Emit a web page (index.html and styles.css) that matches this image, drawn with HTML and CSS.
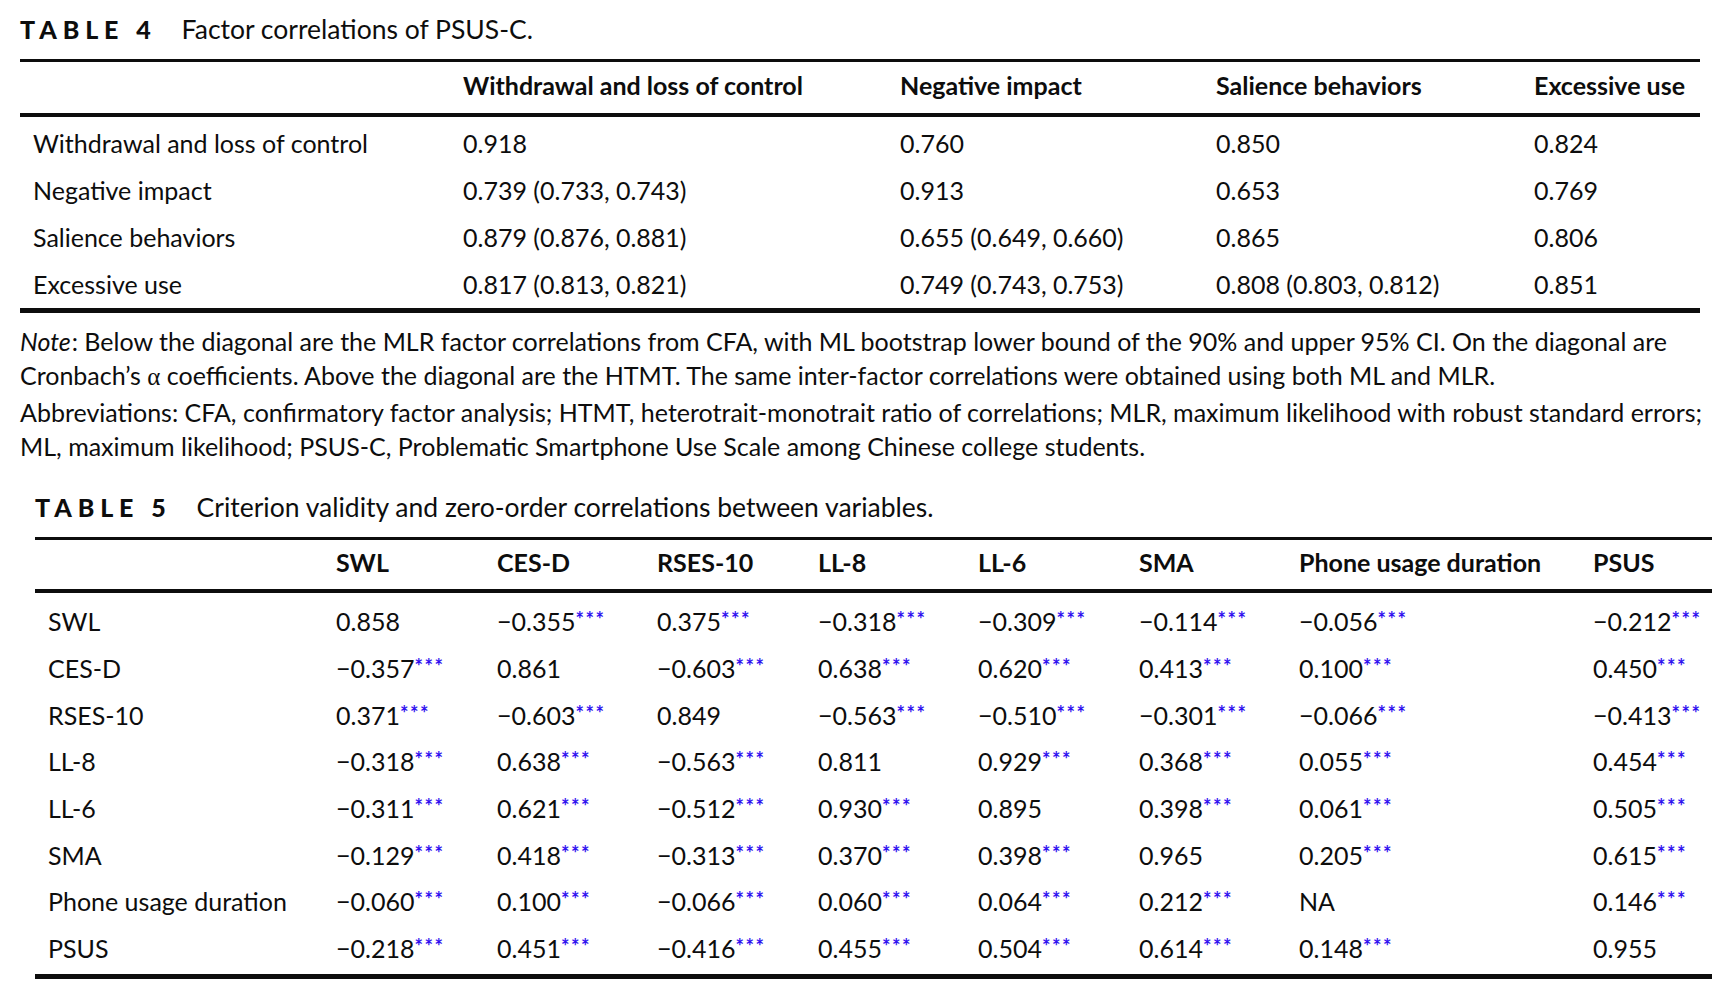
FILE: index.html
```html
<!DOCTYPE html>
<html lang="en">
<head>
<meta charset="utf-8">
<title>Tables 4 and 5</title>
<link rel="stylesheet" href="styles.css">
</head>
<body>
<div class="page">
  <section class="block block-t4">
    <div class="caption"><span class="cap-label">TABLE 4</span><span class="cap-title">Factor correlations of PSUS-C.</span></div>
    <table class="tbl tbl-4">
      <colgroup>
        <col class="w443"><col class="w437"><col class="w316"><col class="w318"><col class="w166">
      </colgroup>
      <thead>
        <tr><th></th><th>Withdrawal and loss of control</th><th>Negative impact</th><th>Salience behaviors</th><th>Excessive use</th></tr>
      </thead>
      <tbody>
        <tr><td>Withdrawal and loss of control</td><td>0.918</td><td>0.760</td><td>0.850</td><td>0.824</td></tr>
        <tr><td>Negative impact</td><td>0.739 (0.733, 0.743)</td><td>0.913</td><td>0.653</td><td>0.769</td></tr>
        <tr><td>Salience behaviors</td><td>0.879 (0.876, 0.881)</td><td>0.655 (0.649, 0.660)</td><td>0.865</td><td>0.806</td></tr>
        <tr><td>Excessive use</td><td>0.817 (0.813, 0.821)</td><td>0.749 (0.743, 0.753)</td><td>0.808 (0.803, 0.812)</td><td>0.851</td></tr>
      </tbody>
    </table>
    <div class="note">
      <p><em class="note-lead">Note</em>: Below the diagonal are the MLR factor correlations from CFA, with ML bootstrap lower bound of the 90% and upper 95% CI. On the diagonal are Cronbach’s <span class="greek">α</span> coefficients. Above the diagonal are the HTMT. The same inter-factor correlations were obtained using both ML and MLR.</p>
      <p>Abbreviations: CFA, confirmatory factor analysis; HTMT, heterotrait-monotrait ratio of correlations; MLR, maximum likelihood with robust standard errors; ML, maximum likelihood; PSUS-C, Problematic Smartphone Use Scale among Chinese college students.</p>
    </div>
  </section>

  <section class="block block-t5">
    <div class="caption"><span class="cap-label">TABLE 5</span><span class="cap-title">Criterion validity and zero-order correlations between variables.</span></div>
    <table class="tbl tbl-5">
      <colgroup>
        <col class="w301"><col class="w161"><col class="w160"><col class="w161"><col class="w160"><col class="w161"><col class="w160"><col class="w294"><col class="w119">
      </colgroup>
      <thead>
        <tr><th></th><th>SWL</th><th>CES-D</th><th>RSES-10</th><th>LL-8</th><th>LL-6</th><th>SMA</th><th>Phone usage duration</th><th>PSUS</th></tr>
      </thead>
      <tbody>
        <tr><td>SWL</td><td>0.858</td><td>−0.355<sup class="sig">***</sup></td><td>0.375<sup class="sig">***</sup></td><td>−0.318<sup class="sig">***</sup></td><td>−0.309<sup class="sig">***</sup></td><td>−0.114<sup class="sig">***</sup></td><td>−0.056<sup class="sig">***</sup></td><td>−0.212<sup class="sig">***</sup></td></tr>
        <tr><td>CES-D</td><td>−0.357<sup class="sig">***</sup></td><td>0.861</td><td>−0.603<sup class="sig">***</sup></td><td>0.638<sup class="sig">***</sup></td><td>0.620<sup class="sig">***</sup></td><td>0.413<sup class="sig">***</sup></td><td>0.100<sup class="sig">***</sup></td><td>0.450<sup class="sig">***</sup></td></tr>
        <tr><td>RSES-10</td><td>0.371<sup class="sig">***</sup></td><td>−0.603<sup class="sig">***</sup></td><td>0.849</td><td>−0.563<sup class="sig">***</sup></td><td>−0.510<sup class="sig">***</sup></td><td>−0.301<sup class="sig">***</sup></td><td>−0.066<sup class="sig">***</sup></td><td>−0.413<sup class="sig">***</sup></td></tr>
        <tr><td>LL-8</td><td>−0.318<sup class="sig">***</sup></td><td>0.638<sup class="sig">***</sup></td><td>−0.563<sup class="sig">***</sup></td><td>0.811</td><td>0.929<sup class="sig">***</sup></td><td>0.368<sup class="sig">***</sup></td><td>0.055<sup class="sig">***</sup></td><td>0.454<sup class="sig">***</sup></td></tr>
        <tr><td>LL-6</td><td>−0.311<sup class="sig">***</sup></td><td>0.621<sup class="sig">***</sup></td><td>−0.512<sup class="sig">***</sup></td><td>0.930<sup class="sig">***</sup></td><td>0.895</td><td>0.398<sup class="sig">***</sup></td><td>0.061<sup class="sig">***</sup></td><td>0.505<sup class="sig">***</sup></td></tr>
        <tr><td>SMA</td><td>−0.129<sup class="sig">***</sup></td><td>0.418<sup class="sig">***</sup></td><td>−0.313<sup class="sig">***</sup></td><td>0.370<sup class="sig">***</sup></td><td>0.398<sup class="sig">***</sup></td><td>0.965</td><td>0.205<sup class="sig">***</sup></td><td>0.615<sup class="sig">***</sup></td></tr>
        <tr><td>Phone usage duration</td><td>−0.060<sup class="sig">***</sup></td><td>0.100<sup class="sig">***</sup></td><td>−0.066<sup class="sig">***</sup></td><td>0.060<sup class="sig">***</sup></td><td>0.064<sup class="sig">***</sup></td><td>0.212<sup class="sig">***</sup></td><td>NA</td><td>0.146<sup class="sig">***</sup></td></tr>
        <tr><td>PSUS</td><td>−0.218<sup class="sig">***</sup></td><td>0.451<sup class="sig">***</sup></td><td>−0.416<sup class="sig">***</sup></td><td>0.455<sup class="sig">***</sup></td><td>0.504<sup class="sig">***</sup></td><td>0.614<sup class="sig">***</sup></td><td>0.148<sup class="sig">***</sup></td><td>0.955</td></tr>
      </tbody>
    </table>
  </section>
</div>
</body>
</html>
```

FILE: styles.css
```css
html, body {
  margin: 0;
  padding: 0;
  background: #ffffff;
}

body {
  font-family: Lato, "Open Sans", "DejaVu Sans", sans-serif;
  font-size: 25px;
  color: #0d0d0d;
  width: 1712px;
  overflow: hidden;
}

.page {
  padding-top: 14px;
}

.block-t4 {
  padding-left: 20px;
}

.block-t5 {
  padding-left: 35px;
  margin-top: 28px;
}

.caption {
  line-height: 30px;
  white-space: nowrap;
}

.block-t4 .caption {
  margin-bottom: 14.5px;
}

.block-t5 .caption {
  margin-bottom: 15.5px;
}

.cap-label {
  font-weight: 900;
  letter-spacing: 5.9px;
  margin-right: 25px;
}

.cap-title {
  font-size: 26.5px;
}

.tbl {
  border-collapse: collapse;
  table-layout: fixed;
  border-top: 3px solid #0d0d0d;
}

.tbl-4 {
  width: 1680px;
  border-bottom: 5px solid #0d0d0d;
}

.tbl-5 {
  width: 1677px;
  border-bottom: 5px solid #0d0d0d;
}

.tbl th,
.tbl td {
  text-align: left;
  padding: 0;
  white-space: nowrap;
  vertical-align: top;
}

.tbl th {
  font-weight: 700;
}

.tbl th:first-child,
.tbl td:first-child {
  padding-left: 13px;
}

.tbl thead tr {
  border-bottom: 4px solid #0d0d0d;
}

.tbl-4 th {
  line-height: 46px;
  padding-bottom: 5px;
}

.tbl-4 td {
  line-height: 47px;
}

.tbl-4 tbody tr:first-child td {
  padding-top: 3.5px;
}

.tbl-5 th {
  line-height: 45px;
  padding-bottom: 4px;
}

.tbl-5 td {
  line-height: 46.66px;
}

.tbl-5 tbody tr:first-child td {
  padding-top: 5.4px;
}

.tbl-5 tbody tr:last-child td {
  padding-bottom: 2px;
}

.sig {
  font-size: 20px;
  font-weight: 700;
  line-height: 0;
  vertical-align: 4px;
  color: #3010f0;
  letter-spacing: 1.6px;
}

.w443 { width: 443px; }
.w437 { width: 437px; }
.w316 { width: 316px; }
.w318 { width: 318px; }
.w166 { width: 166px; }
.w301 { width: 301px; }
.w294 { width: 294px; }
.w161 { width: 161px; }
.w160 { width: 160px; }
.w119 { width: 119px; }

.note {
  width: 1692px;
  margin-top: 10.5px;
  line-height: 34.5px;
}

.note p {
  margin: 0;
}

.note-lead {
  padding-right: 1px;
}

.greek {
  font-family: "Liberation Serif", "DejaVu Serif", serif;
}
```
